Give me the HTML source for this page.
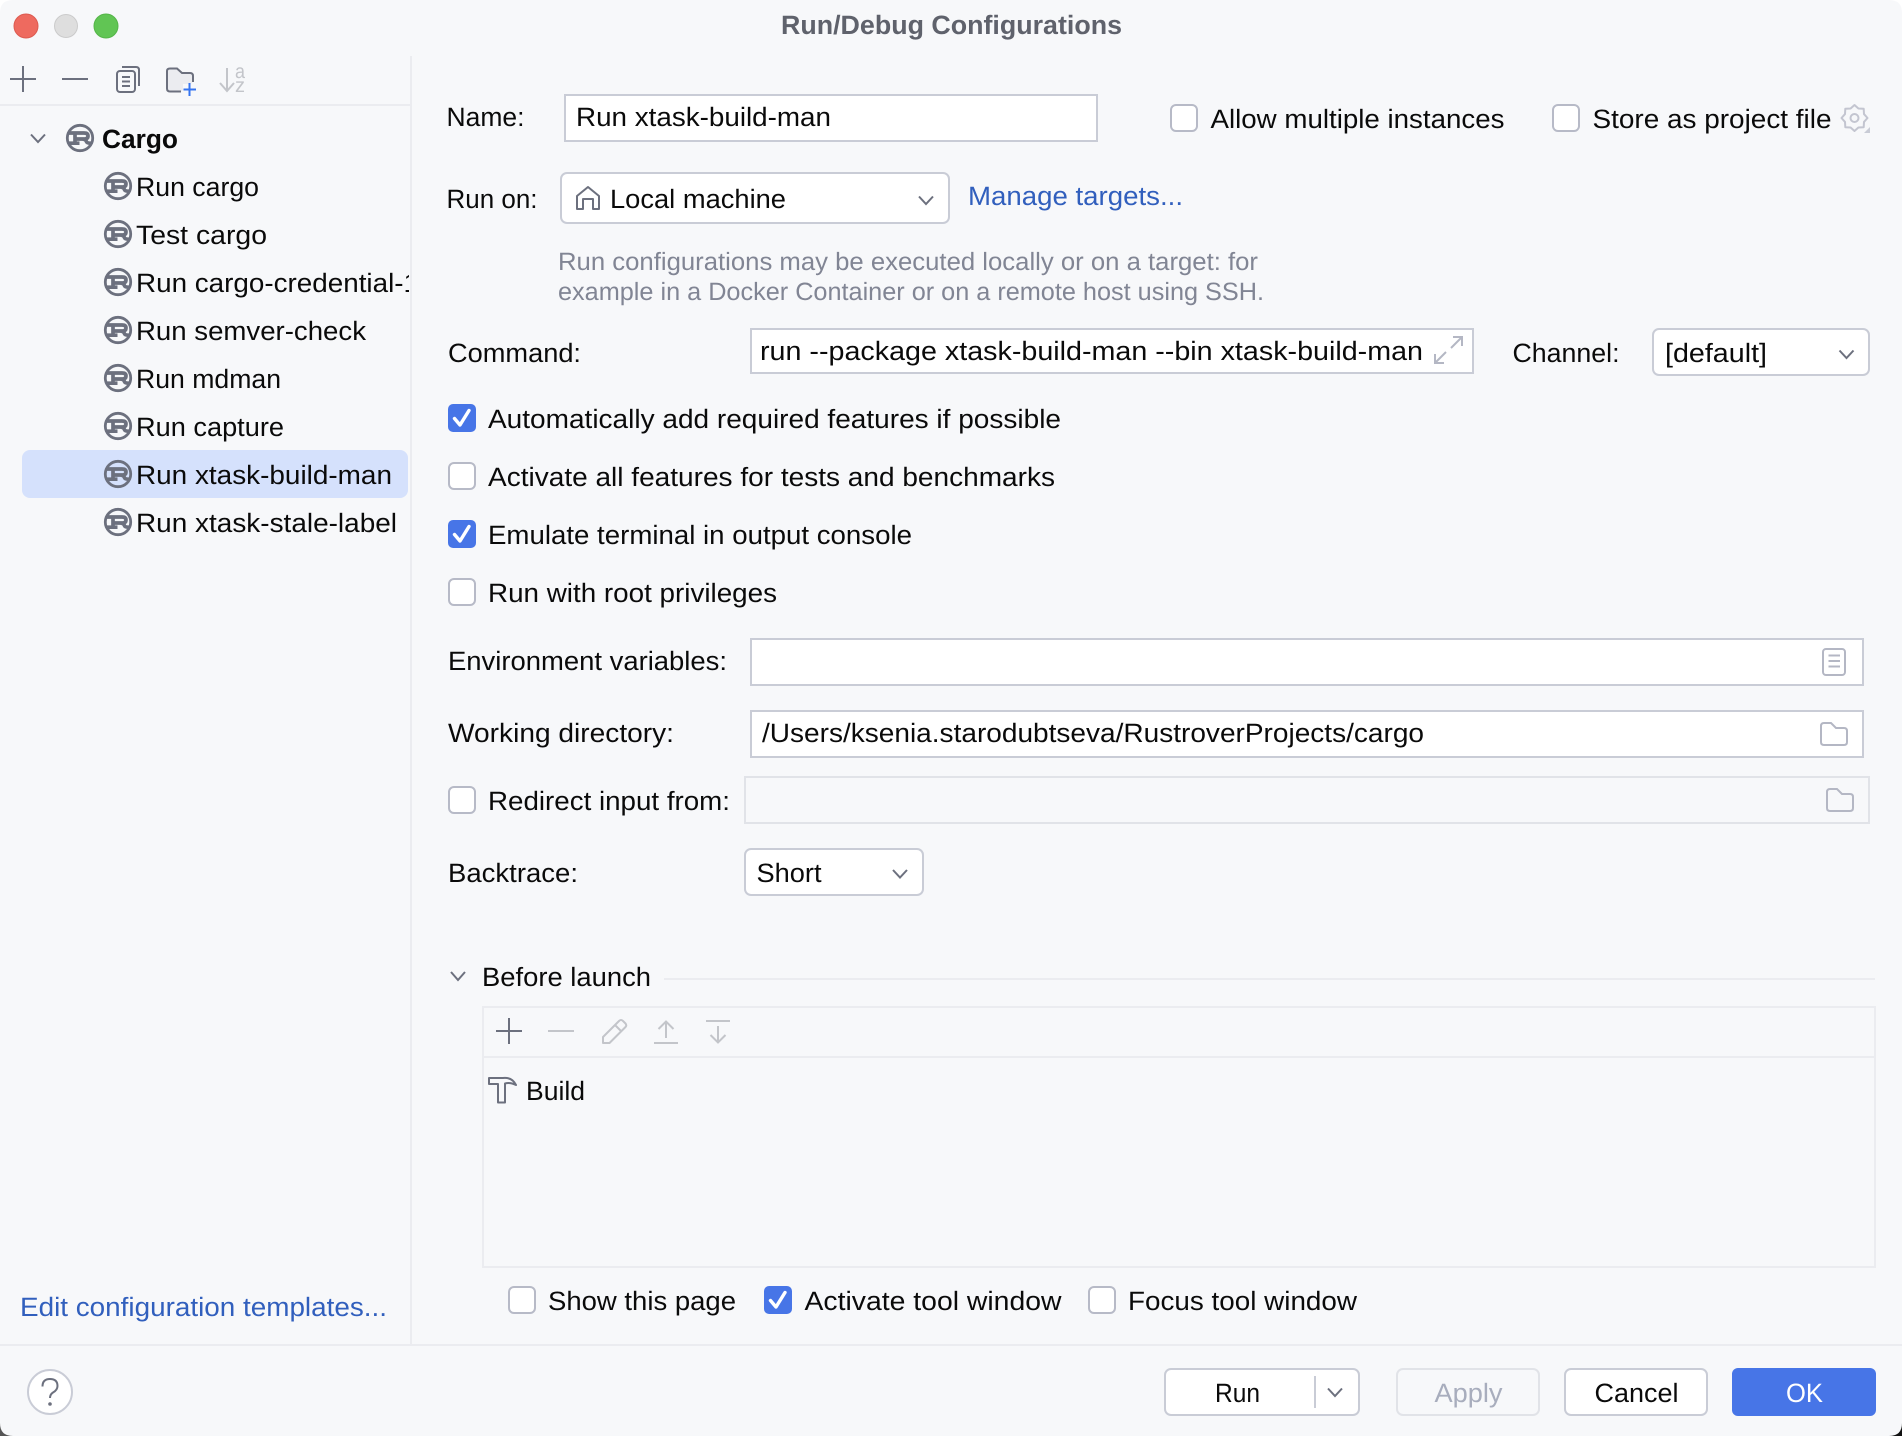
<!DOCTYPE html>
<html lang="en">
<head>
<meta charset="utf-8">
<title>Run/Debug Configurations</title>
<style>
html,body{margin:0;padding:0;background:#f7f8fa;width:1902px;height:1436px;overflow:hidden}
svg{display:block}
text{font-family:"Liberation Sans",Arial,sans-serif;font-size:26.5px;fill:#0a0a0a;text-rendering:geometricPrecision}
.link{fill:#315fbd}
.hint{fill:#818594;font-size:25px}
.fld{fill:#fff;stroke:#c9ccd6;stroke-width:2}
.off{fill:none;stroke:#e1e3e8;stroke-width:2}
.cb{fill:#fff;stroke:#b7bac7;stroke-width:2}
.cbon{fill:#4775e7}
.chk{fill:none;stroke:#fff;stroke-width:3.4;stroke-linecap:round;stroke-linejoin:round}
.ic{fill:none;stroke:#6c707e;stroke-width:2}
.dis{fill:none;stroke:#c3c5ca;stroke-width:2}
.lt{fill:none;stroke:#b4b7c4;stroke-width:2}
.sep{fill:#ebecf0}
</style>
</head>
<body>
<svg width="1902" height="1436" viewBox="0 0 1902 1436" xmlns="http://www.w3.org/2000/svg">
<defs>
<clipPath id="side"><rect x="0" y="0" width="409" height="1436"/></clipPath>
<g id="rust">
<circle cx="0" cy="0" r="12.7" fill="none" stroke="#6c707e" stroke-width="2.8"/>
<path d="M-11 -5H4Q8 -5 8 -2Q8 1 4 1H-5M-5 -5V5.200M-11 5.200H-.5M2 1Q6 1 6.500 3.800Q7 5.200 11 5.200" fill="none" stroke="#6c707e" stroke-width="3.700"/>
</g>
<path id="folder" d="M1821 726Q1821 723 1824 723H1831L1836 728H1844Q1847 728 1847 731V742Q1847 745 1844 745H1824Q1821 745 1821 742Z" fill="none" stroke="#b4b7c4" stroke-width="2"/>
</defs>

<!-- window corners -->
<path d="M0 0H13Q0 0 0 13Z" fill="#fff"/>
<path d="M1902 0H1889Q1902 0 1902 13Z" fill="#fff"/>
<path d="M0 1436H13Q0 1436 0 1423Z" fill="#555"/>
<path d="M1902 1436H1889Q1902 1436 1902 1423Z" fill="#111"/>

<!-- title bar -->
<circle cx="26" cy="26" r="12" fill="#ee6a5f" stroke="#dd5a50" stroke-width="1"/>
<circle cx="66" cy="26" r="11.5" fill="#dedede" stroke="#cbcbcb" stroke-width="1"/>
<circle cx="106" cy="26" r="12" fill="#61c554" stroke="#54b548" stroke-width="1"/>
<text x="781" y="34" textLength="341" lengthAdjust="spacingAndGlyphs" style="font-weight:700;fill:#5f626c">Run/Debug Configurations</text>

<!-- separators -->
<rect class="sep" x="410" y="56" width="2" height="1288"/>
<rect class="sep" x="0" y="104" width="410" height="2"/>
<rect class="sep" x="0" y="1344" width="1902" height="2"/>

<!-- sidebar toolbar -->
<path class="ic" d="M10 79H36M23 66V92"/>
<path class="ic" d="M62 79H88"/>
<rect class="ic" x="117" y="71" width="18" height="21" rx="3"/>
<path class="ic" d="M122 67H136Q139 67 139 70V86"/>
<path class="ic" d="M122 77H130M122 81.500H130M122 86H130"/>
<path d="M181 91.500H170Q167 91.500 167 88.500V71Q167 68.500 170 68.500H177L182 73H190Q193 73 193 76V82" fill="#ebecf0" stroke="#6c707e" stroke-width="2"/>
<path d="M183 84H197V97H183Z" fill="#f7f8fa"/>
<path d="M183.500 89.500H196M189.500 83V96" fill="none" stroke="#3574f0" stroke-width="2"/>
<path class="dis" d="M227 68V91M220 83L227 91L234 83"/>
<text x="235" y="78" textLength="10" lengthAdjust="spacingAndGlyphs" style="font-size:20px;fill:#c3c5ca">a</text>
<text x="235" y="92" textLength="10" lengthAdjust="spacingAndGlyphs" style="font-size:20px;fill:#c3c5ca">z</text>

<!-- tree -->
<rect x="22" y="450" width="386" height="48" rx="8" fill="#d5e1fc"/>
<path class="ic" d="M31 134.500L38 142L45 134.500"/>
<use href="#rust" x="80" y="138"/>
<text x="102" y="148" textLength="76" lengthAdjust="spacingAndGlyphs" style="font-weight:700">Cargo</text>
<use href="#rust" x="118" y="186"/><text x="136" y="196" textLength="123" lengthAdjust="spacingAndGlyphs">Run cargo</text>
<use href="#rust" x="118" y="234"/><text x="136" y="244" textLength="131" lengthAdjust="spacingAndGlyphs">Test cargo</text>
<use href="#rust" x="118" y="282"/><g clip-path="url(#side)"><text x="136" y="292" textLength="283" lengthAdjust="spacingAndGlyphs">Run cargo-credential-1</text></g>
<use href="#rust" x="118" y="330"/><text x="136" y="340" textLength="230" lengthAdjust="spacingAndGlyphs">Run semver-check</text>
<use href="#rust" x="118" y="378"/><text x="136" y="388" textLength="145" lengthAdjust="spacingAndGlyphs">Run mdman</text>
<use href="#rust" x="118" y="426"/><text x="136" y="436" textLength="148" lengthAdjust="spacingAndGlyphs">Run capture</text>
<use href="#rust" x="118" y="474"/><text x="136" y="484" textLength="256" lengthAdjust="spacingAndGlyphs">Run xtask-build-man</text>
<use href="#rust" x="118" y="522"/><text x="136" y="532" textLength="261" lengthAdjust="spacingAndGlyphs">Run xtask-stale-label</text>
<text class="link" x="20" y="1316" textLength="367" lengthAdjust="spacingAndGlyphs">Edit configuration templates...</text>

<!-- help -->
<circle cx="50" cy="1392" r="22" fill="#fff" stroke="#c9ccd6" stroke-width="2"/>
<path d="M42.500 1386.500Q42.500 1379 50 1379Q57.500 1379 57.500 1386Q57.500 1390 53 1392.500Q50 1394.500 50 1398" fill="none" stroke="#6c707e" stroke-width="2"/>
<circle cx="50" cy="1404" r="1.800" fill="#6c707e"/>

<!-- name row -->
<text x="446.500" y="126" textLength="78" lengthAdjust="spacingAndGlyphs">Name:</text>
<rect class="fld" x="565" y="95" width="532" height="46"/>
<text x="576" y="126" textLength="255" lengthAdjust="spacingAndGlyphs">Run xtask-build-man</text>
<rect class="cb" x="1171" y="105" width="26" height="26" rx="5"/>
<text x="1210.500" y="128" textLength="294" lengthAdjust="spacingAndGlyphs">Allow multiple instances</text>
<rect class="cb" x="1553" y="105" width="26" height="26" rx="5"/>
<text x="1592.500" y="128" textLength="239" lengthAdjust="spacingAndGlyphs">Store as project file</text>
<path transform="translate(1854.5 118)" d="M0 -13L3.900 -9.500L9.200 -9.200L9.500 -3.900L13 0L9.500 3.900L9.200 9.200L3.900 9.500L0 13L-3.900 9.500L-9.200 9.200L-9.500 3.900L-13 0L-9.500 -3.900L-9.200 -9.200L-3.900 -9.500Z" fill="none" stroke="#c3c5d0" stroke-width="2" stroke-linejoin="round"/>
<circle cx="1854.500" cy="118" r="4" fill="none" stroke="#c3c5d0" stroke-width="2"/>
<path d="M1870 127V133H1864Z" fill="#c9ccd6"/>

<!-- run on -->
<text x="446.500" y="208" textLength="91" lengthAdjust="spacingAndGlyphs">Run on:</text>
<rect class="fld" x="561" y="173" width="388" height="50" rx="6"/>
<path class="ic" d="M577 209V196L588 187L599 196V209H593V199H583V209Z" stroke-linejoin="round"/>
<text x="610" y="208" textLength="176" lengthAdjust="spacingAndGlyphs">Local machine</text>
<path class="ic" d="M919 196.500L926 204L933 196.500"/>
<text class="link" x="968" y="205" textLength="215" lengthAdjust="spacingAndGlyphs">Manage targets...</text>
<text class="hint" x="558" y="270" textLength="700" lengthAdjust="spacingAndGlyphs">Run configurations may be executed locally or on a target: for</text>
<text class="hint" x="558" y="300" textLength="706" lengthAdjust="spacingAndGlyphs">example in a Docker Container or on a remote host using SSH.</text>

<!-- command -->
<text x="448" y="362" textLength="133" lengthAdjust="spacingAndGlyphs">Command:</text>
<rect class="fld" x="751" y="329" width="722" height="44"/>
<text x="760" y="360" textLength="663" lengthAdjust="spacingAndGlyphs">run --package xtask-build-man --bin xtask-build-man</text>
<path class="lt" d="M1451 348L1462 337M1453 337H1462V346M1446 352L1435 363M1435 354V363H1444"/>
<text x="1512.500" y="362" textLength="107" lengthAdjust="spacingAndGlyphs">Channel:</text>
<rect class="fld" x="1653" y="329" width="216" height="46" rx="6"/>
<text x="1665" y="362" textLength="102" lengthAdjust="spacingAndGlyphs">[default]</text>
<path class="ic" d="M1839.500 350.500L1846.500 358L1853.500 350.500"/>

<!-- checkboxes -->
<rect class="cbon" x="448" y="404" width="28" height="28" rx="5"/>
<path class="chk" d="M454.500 418.500L460 425L469 410.500"/>
<text x="488" y="428" textLength="573" lengthAdjust="spacingAndGlyphs">Automatically add required features if possible</text>
<rect class="cb" x="449" y="463" width="26" height="26" rx="5"/>
<text x="488" y="486" textLength="567" lengthAdjust="spacingAndGlyphs">Activate all features for tests and benchmarks</text>
<rect class="cbon" x="448" y="520" width="28" height="28" rx="5"/>
<path class="chk" d="M454.500 534.500L460 541L469 526.500"/>
<text x="488" y="544" textLength="424" lengthAdjust="spacingAndGlyphs">Emulate terminal in output console</text>
<rect class="cb" x="449" y="579" width="26" height="26" rx="5"/>
<text x="488" y="602" textLength="289" lengthAdjust="spacingAndGlyphs">Run with root privileges</text>

<!-- env -->
<text x="448" y="670" textLength="279" lengthAdjust="spacingAndGlyphs">Environment variables:</text>
<rect class="fld" x="751" y="639" width="1112" height="46"/>
<rect class="lt" x="1823" y="649" width="22" height="26" rx="3"/>
<path class="lt" d="M1828.500 655.500H1840M1828.500 661H1840M1828.500 666.500H1840"/>

<!-- working dir -->
<text x="448" y="742" textLength="226" lengthAdjust="spacingAndGlyphs">Working directory:</text>
<rect class="fld" x="751" y="711" width="1112" height="46"/>
<text x="762" y="742" textLength="662" lengthAdjust="spacingAndGlyphs">/Users/ksenia.starodubtseva/RustroverProjects/cargo</text>
<use href="#folder"/>

<!-- redirect -->
<rect class="cb" x="449" y="787" width="26" height="26" rx="5"/>
<text x="488" y="810" textLength="242" lengthAdjust="spacingAndGlyphs">Redirect input from:</text>
<rect class="off" x="745" y="777" width="1124" height="46"/>
<use href="#folder" x="6" y="66"/>

<!-- backtrace -->
<text x="448" y="882" textLength="130" lengthAdjust="spacingAndGlyphs">Backtrace:</text>
<rect class="fld" x="745" y="849" width="178" height="46" rx="6"/>
<text x="756.500" y="882" textLength="65" lengthAdjust="spacingAndGlyphs">Short</text>
<path class="ic" d="M893 870L900 877.500L907 870"/>

<!-- before launch -->
<path class="ic" d="M451 972L458 980L465 972"/>
<text x="482" y="986" textLength="169" lengthAdjust="spacingAndGlyphs">Before launch</text>
<rect class="sep" x="664" y="978" width="1211" height="2"/>
<rect x="483" y="1007" width="1392" height="260" fill="none" stroke="#ebecf0" stroke-width="2"/>
<rect class="sep" x="483" y="1056" width="1392" height="2"/>
<path class="ic" d="M496 1031H522M509 1018V1044"/>
<path class="dis" d="M548 1031H574"/>
<path class="dis" d="M603 1043V1037L619 1021Q621 1019 623 1021L625.500 1023.500Q627 1025.500 625.500 1027L609.500 1043ZM615 1025L621.500 1031.500" stroke-linejoin="round"/>
<path class="dis" d="M654 1043H678M666 1022V1038M658.500 1029L666 1021.500L673.500 1029"/>
<path class="dis" d="M706 1021H730M718 1026V1042M710.500 1035L718 1042.500L725.500 1035"/>
<path class="ic" d="M489 1078H503Q512 1077 516 1085Q510 1082 505 1083.500V1102.500H498V1084H489Z" stroke-linejoin="round"/>
<text x="526" y="1100" textLength="59" lengthAdjust="spacingAndGlyphs">Build</text>

<!-- options -->
<rect class="cb" x="509" y="1287" width="26" height="26" rx="5"/>
<text x="548" y="1310" textLength="188" lengthAdjust="spacingAndGlyphs">Show this page</text>
<rect class="cbon" x="764" y="1286" width="28" height="28" rx="5"/>
<path class="chk" d="M770.500 1300.500L776 1307L785 1292.500"/>
<text x="804.500" y="1310" textLength="257" lengthAdjust="spacingAndGlyphs">Activate tool window</text>
<rect class="cb" x="1089" y="1287" width="26" height="26" rx="5"/>
<text x="1128" y="1310" textLength="229" lengthAdjust="spacingAndGlyphs">Focus tool window</text>

<!-- buttons -->
<rect class="fld" x="1165" y="1369" width="194" height="46" rx="6"/>
<text x="1215" y="1402" textLength="45" lengthAdjust="spacingAndGlyphs">Run</text>
<rect x="1314" y="1376" width="2" height="32" fill="#c9ccd6"/>
<path class="ic" d="M1328 1388.500L1335 1396L1342 1388.500"/>
<rect class="off" x="1397" y="1369" width="142" height="46" rx="6"/>
<text x="1434.500" y="1402" textLength="68" lengthAdjust="spacingAndGlyphs" style="fill:#a8adbd">Apply</text>
<rect class="fld" x="1565" y="1369" width="142" height="46" rx="6"/>
<text x="1594.500" y="1402" textLength="84" lengthAdjust="spacingAndGlyphs">Cancel</text>
<rect x="1732" y="1368" width="144" height="48" rx="6" fill="#4775e7"/>
<text x="1786" y="1402" textLength="37" lengthAdjust="spacingAndGlyphs" style="fill:#fff">OK</text>
</svg>
</body>
</html>
